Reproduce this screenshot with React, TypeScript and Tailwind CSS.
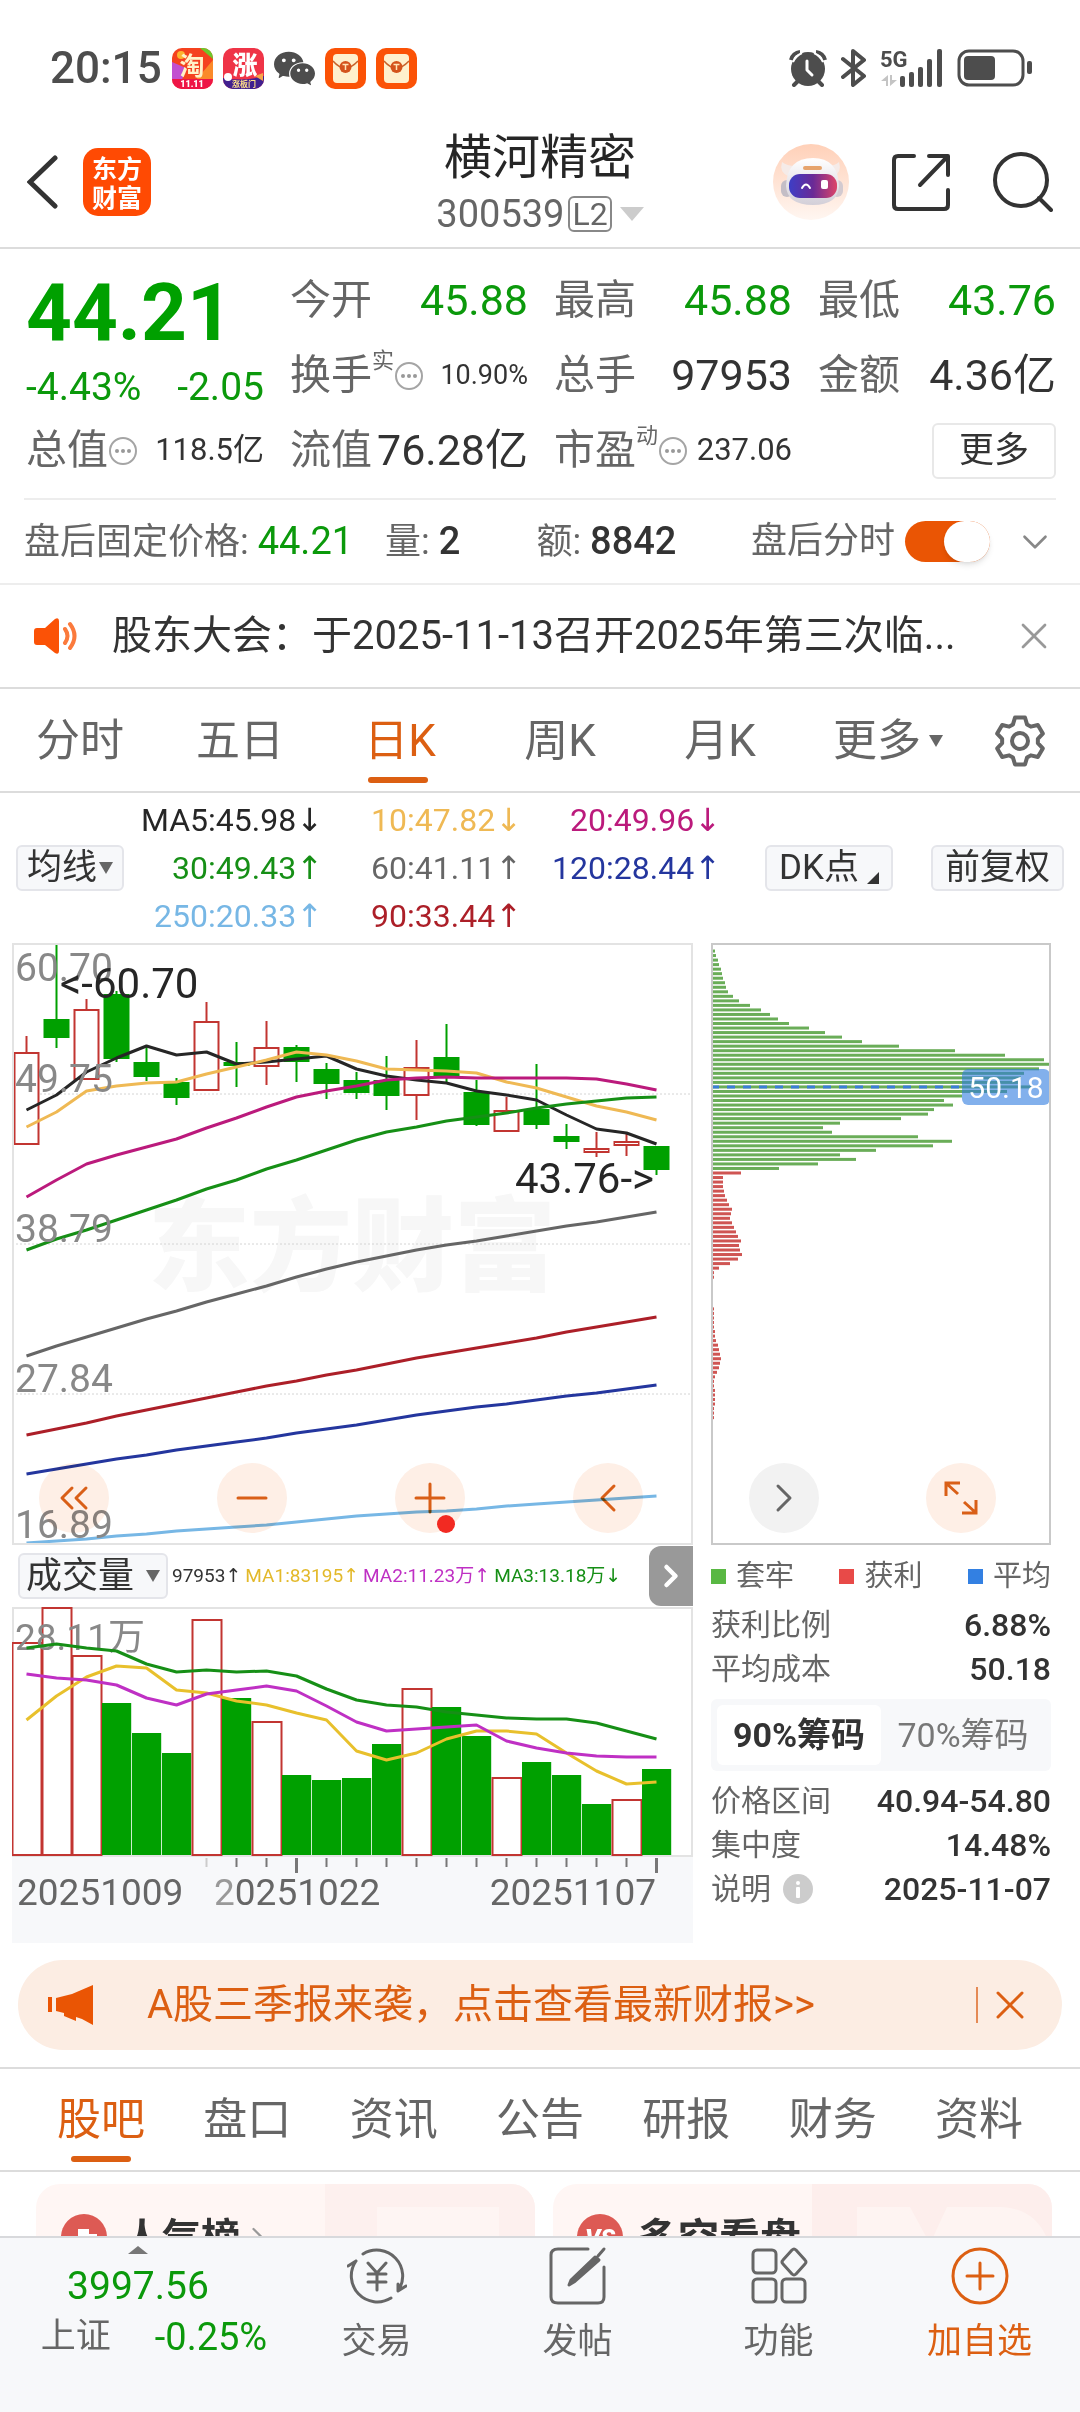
import type { ReactNode } from "react";
import { IoLogoWechat } from "react-icons/io5";
import { ChevronDown, ChevronLeft, ChevronRight, ChevronsLeft, Minus, Plus, X } from "lucide-react";

const GREEN = "#00a000";
const RED = "#c23531";

// x of the i-th trading day inside the 681 wide charts
const dayX = (i: number) => 14.5 + i * 30;
const toPoints = (ys: number[]) => ys.map((y, i) => `${dayX(i)},${y}`).join(" ");

// high, body top, body bottom, low, rising
const candles: [number, number, number, number, boolean][] = [
  [93, 109, 201, 201, true],
  [0, 76, 94, 105, false],
  [56, 66, 136, 136, true],
  [48, 51, 115, 119, false],
  [104, 119, 133, 138, false],
  [135, 139, 154, 162, false],
  [59, 78, 147, 147, true],
  [99, 119, 122, 144, false],
  [78, 104, 123, 142, true],
  [102, 104, 118, 139, false],
  [120, 126, 140, 156, false],
  [129, 137, 149, 156, false],
  [113, 137, 152, 167, false],
  [97, 124, 152, 177, true],
  [81, 114, 133, 139, false],
  [137, 149, 181, 183, false],
  [154, 167, 188, 188, true],
  [121, 166, 181, 186, false],
  [181, 193, 198, 206, false],
  [189, 205, 209, 214, true],
  [190, 198, 202, 213, true],
  [203, 203, 226, 232, false],
];

const averages = [
  { color: "#262626", ys: [167, 152, 129, 115, 103, 112, 109, 121, 119, 116, 113, 126, 133, 137, 140, 148, 152, 157, 172, 186, 190, 201] },
  { color: "#efb954", ys: [184, 169, 148, 143, 140, 139, 131, 124, 117, 109, 112, 118, 126, 127, 128, 130, 139, 145, 154, 163, 169, 177] },
  { color: "#bb1a7c", ys: [254, 237, 221, 212, 204, 196, 185, 175, 164, 154, 148, 143, 137, 135, 134, 135, 135, 135, 135, 136, 141, 147] },
  { color: "#168f16", ys: [307, 296, 287, 277, 267, 257, 246, 237, 226, 217, 207, 197, 189, 184, 178, 174, 170, 165, 161, 158, 155, 154] },
  { color: "#666666", ys: [413, 403, 394, 385, 376, 368, 359, 351, 343, 334, 326, 319, 313, 307, 302, 298, 293, 288, 283, 279, 274, 269] },
  { color: "#ac1f28", ys: [492, 486, 480, 473, 467, 461, 455, 449, 443, 438, 432, 427, 421, 415, 410, 405, 400, 395, 389, 384, 379, 374] },
  { color: "#24369e", ys: [531, 526, 521, 516, 512, 507, 503, 499, 495, 490, 486, 482, 477, 472, 468, 464, 461, 457, 453, 450, 446, 442] },
  { color: "#77b7e5", ys: [600, 598, 596, 593, 591, 588, 586, 584, 582, 579, 576, 573, 571, 569, 568, 566, 563, 561, 559, 557, 555, 553] },
];

const priceLabels = [
  { text: "60.70", y: 38 },
  { text: "49.75", y: 149 },
  { text: "38.79", y: 299 },
  { text: "27.84", y: 449 },
  { text: "16.89", y: 595 },
];

const volumes: [number, boolean][] = [
  [36, true], [1, true], [49, true], [96, false], [126, false], [146, false], [13, true], [91, false],
  [115, true], [168, false], [173, false], [171, false], [137, false], [82, true], [100, false], [129, false],
  [171, true], [155, false], [168, false], [197, false], [193, true], [162, false],
];

const volumeAverages = [
  { color: "#168f16", ys: [41, 37, 41, 44, 57, 65, 63, 65, 64, 69, 82, 93, 98, 100, 105, 108, 111, 112, 112, 116, 124, 132] },
  { color: "#e8c02c", ys: [113, 89, 70, 59, 61, 83, 86, 94, 98, 106, 113, 144, 153, 146, 132, 124, 124, 127, 146, 164, 177, 175] },
  { color: "#bf30c4", ys: [67, 71, 73, 78, 91, 98, 87, 83, 79, 84, 99, 115, 124, 122, 120, 118, 134, 141, 146, 149, 150, 150] },
];

const trapped = [
  1, 3, 4, 6, 7, 9, 10, 11, 13, 14, 16, 21, 27, 38, 49, 58, 66, 77, 97, 113, 130, 150, 187, 243, 293, 332, 339,
  327, 312, 309, 308, 319, 295, 250, 232, 241, 222, 216, 189, 128, 111, 120, 206, 240, 221, 164, 128, 144, 106, 67,
];
const profit = [
  29, 11, 11, 11, 12, 13, 15, 17, 20, 19, 18, 20, 22, 24, 26, 29, 27, 28, 30, 26, 18, 7, 2, 2, 1, 1, 1, 1, 1, 1, 2,
  2, 2, 2, 2, 3, 3, 4, 6, 7, 8, 9, 8, 7, 5, 3, 2, 2, 3, 3, 3, 3, 2, 2, 2, 1, 1, 1, 1, 1, 1,
];

const maLegend = [
  { text: "MA5:45.98", up: false, color: "text-[#262626]" },
  { text: "10:47.82", up: false, color: "text-[#efb954]" },
  { text: "20:49.96", up: false, color: "text-[#bb1a7c]" },
  { text: "30:49.43", up: true, color: "text-[#168f16]" },
  { text: "60:41.11", up: true, color: "text-[#666666]" },
  { text: "120:28.44", up: true, color: "text-[#24369e]" },
  { text: "250:20.33", up: true, color: "text-[#77b7e5]" },
  { text: "90:33.44", up: true, color: "text-[#ac1f28]" },
];

const volumeLegend = [
  { text: "97953", up: true, color: "text-[#333333]" },
  { text: "MA1:83195", up: true, color: "text-[#e3b92a]" },
  { text: "MA2:11.23万", up: true, color: "text-[#bf30c4]" },
  { text: "MA3:13.18万", up: false, color: "text-[#168f16]" },
];

const sections = ["股吧", "盘口", "资讯", "公告", "研报", "财务", "资料"];

function Arrow({ up }: { up: boolean }) {
  return <span className="font-['DejaVu_Sans'] leading-none">{up ? "↑" : "↓"}</span>;
}

function AlarmIcon() {
  return (
    <svg viewBox="0 0 38 38" className="size-[38px]" fill="#4d4d4d">
      <circle cx="19" cy="20" r="17" />
      <path d="M2 11 A10 10 0 0 1 11 3 M27 3 A10 10 0 0 1 36 11" fill="none" stroke="#4d4d4d" strokeWidth="4" />
      <path d="M4 13 A18 18 0 0 1 13 4 M25 4 A18 18 0 0 1 34 13" fill="none" stroke="#fff" strokeWidth="2" />
      <path d="M9 32 L5 36 M29 32 L33 36" stroke="#4d4d4d" strokeWidth="4" strokeLinecap="round" />
      <path d="M18 12 V21 L23 26" fill="none" stroke="#fff" strokeWidth="3" strokeLinecap="round" strokeLinejoin="round" />
    </svg>
  );
}

function BluetoothIcon() {
  return (
    <svg viewBox="0 0 26 38" className="h-[38px] w-[26px]" fill="none" stroke="#4d4d4d" strokeWidth="4" strokeLinecap="round" strokeLinejoin="round">
      <path d="M2 10 L23 27 L12 36 V2 L23 11 L2 28" />
    </svg>
  );
}

function SignalIcon() {
  return (
    <svg viewBox="0 0 62 38" className="h-[38px] w-[62px] overflow-visible" fill="#4d4d4d">
      <text x="-1" y="18" fontSize="22" fontWeight="700">5G</text>
      <path d="M0 32 L7 26 V37 H5 V32 Z M9 26 H11 V31 H16 L9 37 Z" fill="#c4c4c4" />
      <rect x="19" y="27" width="5" height="11" rx="2" />
      <rect x="28" y="23" width="5" height="15" rx="2" />
      <rect x="37" y="18" width="5" height="20" rx="2" />
      <rect x="46" y="10" width="5" height="28" rx="2" />
      <rect x="56" y="0" width="5" height="38" rx="2" />
    </svg>
  );
}

function BatteryIcon() {
  return (
    <svg viewBox="0 0 76 38" className="h-[38px] w-[76px]" fill="#4d4d4d">
      <rect x="2" y="2" width="64" height="34" rx="10" fill="none" stroke="#4d4d4d" strokeWidth="3" />
      <rect x="7" y="7" width="31" height="24" rx="4" />
      <rect x="70" y="12" width="5" height="13" rx="2" />
    </svg>
  );
}

function EnvelopeIcon() {
  return (
    <svg viewBox="0 0 41 41" className="size-[41px]">
      <rect width="41" height="41" rx="10" fill="#fb5206" />
      <rect x="8" y="6" width="25" height="29" rx="4" fill="#fff0cd" />
      <path d="M8 13 Q20 27 33 13" fill="none" stroke="#c8622a" strokeWidth="1.5" />
      <circle cx="20.5" cy="19" r="6" fill="#d4531c" />
      <path d="M17.5 16.5 H23.5 M20.5 16.5 V22" stroke="#ffe3b5" strokeWidth="1.5" />
    </svg>
  );
}

function TaobaoIcon() {
  return (
    <svg viewBox="0 0 41 41" className="size-[41px]">
      <clipPath id="tb"><rect width="41" height="41" rx="10" /></clipPath>
      <g clipPath="url(#tb)">
        <rect width="41" height="41" fill="#f5421f" />
        <path d="M0 14 L14 20 L10 32 H0 Z" fill="#c24fd0" />
        <path d="M41 12 V32 H24 Z" fill="#fb8a2a" />
        <circle cx="9" cy="7" r="4" fill="#fcb42f" />
        <path d="M28 0 H41 V11 Z" fill="#6cc92c" />
        <rect y="31" width="41" height="10" fill="#ee1546" />
        <text x="20" y="27" fontSize="25" fontWeight="700" fill="#fff3c8" textAnchor="middle">淘</text>
        <text x="20" y="39" fontSize="9" fontWeight="900" fill="#fff" textAnchor="middle">11.11</text>
      </g>
    </svg>
  );
}

function ZhangIcon() {
  return (
    <svg viewBox="0 0 41 41" className="size-[41px]">
      <clipPath id="zh"><rect width="41" height="41" rx="10" /></clipPath>
      <g clipPath="url(#zh)">
        <rect width="41" height="41" fill="#ef3447" />
        <path d="M0 30 Q20 34 41 28 V41 H0 Z" fill="#41208f" />
        <path d="M32 28 L40 25 V33 Z" fill="#f7a54a" />
        <circle cx="5" cy="29" r="4" fill="#fff" />
        <text x="22" y="26" fontSize="25" fontWeight="900" fill="#fff" textAnchor="middle">涨</text>
        <text x="21" y="39" fontSize="8" fontWeight="700" fill="#ffe08a" textAnchor="middle">涨板门</text>
      </g>
    </svg>
  );
}

function LogoIcon() {
  return (
    <svg viewBox="0 0 68 68" className="size-[68px]">
      <rect width="68" height="68" rx="15" fill="#ff4a03" />
      <text x="34" y="30" fontSize="25" fontWeight="700" fill="#fff" textAnchor="middle">东方</text>
      <text x="34" y="59" fontSize="25" fontWeight="700" fill="#fff" textAnchor="middle">财富</text>
    </svg>
  );
}

function RobotIcon() {
  return (
    <svg viewBox="0 0 76 76" className="size-[76px]">
      <defs>
        <linearGradient id="halo" x1="0" y1="0" x2="0" y2="1">
          <stop offset="0" stopColor="#ffd0b8" />
          <stop offset="1" stopColor="#fff6f1" />
        </linearGradient>
        <linearGradient id="visor" x1="0" y1="0" x2="1" y2="0">
          <stop offset="0" stopColor="#3d3ec6" />
          <stop offset="0.5" stopColor="#6a2a96" />
          <stop offset="1" stopColor="#dd4468" />
        </linearGradient>
        <linearGradient id="shell" x1="0" y1="0" x2="0" y2="1">
          <stop offset="0" stopColor="#ffffff" />
          <stop offset="1" stopColor="#d3cfd8" />
        </linearGradient>
      </defs>
      <circle cx="38" cy="38" r="38" fill="url(#halo)" />
      <path d="M15 32 Q6 28 9 18 Q14 22 22 22 Z M61 32 Q69 28 66 18 Q62 22 54 22 Z" fill="#f5ebe8" />
      <rect x="8" y="36" width="12" height="17" rx="6" fill="#c4bec6" />
      <rect x="58" y="36" width="12" height="17" rx="6" fill="#d3cad0" />
      <path d="M13 42 Q14 14 40 14 Q65 14 66 42 Q65 61 40 61 Q14 61 13 42 Z" fill="url(#shell)" />
      <rect x="30" y="22" width="19" height="4" rx="2" fill="#e6a36c" />
      <rect x="16" y="30" width="48" height="24" rx="11" fill="url(#visor)" />
      <path d="M29 44 Q33 37 37 44" fill="none" stroke="#fff" strokeWidth="2" strokeLinecap="round" />
      <rect x="48" y="36" width="7" height="9" rx="2" fill="#fff" />
    </svg>
  );
}

function ShareIcon() {
  return (
    <svg viewBox="0 0 58 58" className="size-[58px]" fill="none" stroke="#333" strokeWidth="4" strokeLinecap="round" strokeLinejoin="round">
      <path d="M22 3 H6 Q2 3 2 7 V52 Q2 56 6 56 H52 Q56 56 56 52 V37" />
      <path d="M37 3 H56 V22 M55 4 L28 32" />
    </svg>
  );
}

function SearchIcon() {
  return (
    <svg viewBox="0 0 60 60" className="size-[60px]" fill="none" stroke="#333" strokeWidth="4" strokeLinecap="round">
      <circle cx="28" cy="28" r="26" />
      <path d="M46 46 L58 58" />
    </svg>
  );
}

function GearIcon() {
  const points: string[] = [];
  for (let tooth = 0; tooth < 6; tooth++) {
    const steps: [number, number][] = [[-23, 18], [-12, 24], [12, 24], [23, 18]];
    for (const [offset, radius] of steps) {
      const angle = ((tooth * 60 + offset - 90) * Math.PI) / 180;
      points.push(`${27 + radius * Math.cos(angle)},${27 + radius * Math.sin(angle)}`);
    }
  }
  return (
    <svg viewBox="0 0 54 54" className="size-[54px]" fill="none" stroke="#666" strokeWidth="4" strokeLinejoin="round">
      <polygon points={points.join(" ")} />
      <circle cx="27" cy="27" r="8" />
    </svg>
  );
}

function SpeakerIcon() {
  return (
    <svg viewBox="0 0 46 38" className="h-[38px] w-[46px]" fill="#fb5206">
      <path d="M3 11 H11 L21 2 Q25 0 25 4 V34 Q25 38 21 36 L11 28 H3 Q0 28 0 25 V14 Q0 11 3 11 Z" />
      <path d="M31 12 Q36 19 31 26 M36 7 Q45 19 36 31" fill="none" stroke="#fb7a3c" strokeWidth="4" strokeLinecap="round" />
    </svg>
  );
}

function MegaphoneIcon() {
  return (
    <svg viewBox="0 0 46 40" className="h-10 w-[46px]" fill="#ea5504">
      <rect x="0" y="12" width="4" height="15" />
      <path d="M8 13 L24 9 L45 0 V40 L34 34 L28 32 V36 L16 31 V28 L8 26 Z" />
    </svg>
  );
}

function Dots() {
  return (
    <svg viewBox="0 0 30 30" className="size-[30px] shrink-0" fill="#999">
      <circle cx="15" cy="15" r="13" fill="none" stroke="#a5a5a5" strokeWidth="2" />
      <circle cx="9" cy="15" r="2" />
      <circle cx="15" cy="15" r="2" />
      <circle cx="21" cy="15" r="2" />
    </svg>
  );
}

function Triangle({ className }: { className: string }) {
  return (
    <svg viewBox="0 0 14 12" preserveAspectRatio="none" className={className} fill="currentColor">
      <path d="M0 0 H14 L7 12 Z" />
    </svg>
  );
}

const tones = {
  green: "text-[43px] text-[#0b990b]",
  dark: "text-[43px] text-[#333]",
  small: "text-[31px] text-[#333]",
  tiny: "text-[27px] text-[#333]",
};

type QuoteProps = { label: string; value: string; mark?: string; dots?: boolean; tone?: keyof typeof tones };

function Quote({ label, value, mark, dots, tone = "dark" }: QuoteProps) {
  return (
    <div className="flex items-center justify-between whitespace-nowrap">
      <div className="flex items-center text-[41px] text-[#666]">
        {label}
        {mark && <span className="self-start text-[22px] leading-none">{mark}</span>}
        {dots && <Dots />}
      </div>
      <span className={tones[tone]}>{value}</span>
    </div>
  );
}

function RoundButton({ label, gray, children }: { label: string; gray?: boolean; children: ReactNode }) {
  return (
    <button
      aria-label={label}
      className={`relative flex size-[70px] items-center justify-center rounded-full mix-blend-multiply ${
        gray ? "bg-[#f2f2f2] text-[#666]" : "bg-[#feefe6] text-[#d95f17]"
      }`}
    >
      {children}
    </button>
  );
}

function KLineChart() {
  return (
    <div className="relative">
      <svg viewBox="0 0 681 602" className="block w-full">
        <text x="340" y="340" fontSize="102" fontWeight="900" fill="#f7f7f7" textAnchor="middle">东方财富</text>
        <path d="M0 151 H681 M0 301 H681 M0 451 H681" stroke="#d4d4d4" strokeDasharray="2 2" />
        {candles.map(([high, top, bottom, low, rising], i) => (
          <g key={i} stroke={rising ? RED : GREEN} strokeWidth="2" fill={rising ? "#fff" : GREEN}>
            <path d={`M${dayX(i)} ${high} V${top} M${dayX(i)} ${bottom} V${low}`} />
            <rect x={dayX(i) - 12} y={top + 1} width="24" height={bottom - top - 1} />
          </g>
        ))}
        {averages.map(({ color, ys }) => (
          <polyline key={color} points={toPoints(ys)} fill="none" stroke={color} strokeWidth="3" strokeLinejoin="round" />
        ))}
        {priceLabels.map(({ text, y }) => (
          <text key={text} x="3" y={y} fontSize="39" fill="#888">{text}</text>
        ))}
        <text x="48" y="55" fontSize="42" fill="#262626">&lt;-60.70</text>
        <text x="642" y="250" fontSize="42" fill="#262626" textAnchor="end">43.76-&gt;</text>
        <rect x="1" y="1" width="679" height="600" fill="none" stroke="#e3e3e3" strokeWidth="2" />
      </svg>
      <div className="absolute inset-x-0 bottom-3 flex justify-between pr-[50px] pl-[27px]">
        <RoundButton label="最左"><ChevronsLeft className="size-12" strokeWidth={1.5} /></RoundButton>
        <RoundButton label="缩小"><Minus className="size-12" strokeWidth={1.5} /></RoundButton>
        <RoundButton label="放大">
          <Plus className="size-12" strokeWidth={1.5} />
          <i className="absolute right-2.5 bottom-0 size-[18px] rounded-full bg-[#f22a22]" />
        </RoundButton>
        <RoundButton label="左移"><ChevronLeft className="size-12" strokeWidth={1.5} /></RoundButton>
      </div>
    </div>
  );
}

function VolumeChart() {
  return (
    <svg viewBox="0 0 681 336" className="block w-full">
      <rect y="250" width="681" height="86" fill="#f7f8fa" />
      <rect x="1" y="1" width="679" height="248" fill="none" stroke="#e3e3e3" strokeWidth="2" />
      {volumes.map(([top, rising], i) =>
        rising ? (
          <rect key={i} x={dayX(i) - 14} y={top} width="29" height={248 - top} fill="#fff" stroke={RED} strokeWidth="2" />
        ) : (
          <rect key={i} x={dayX(i) - 14.5} y={top} width="29.2" height={248 - top} fill={GREEN} />
        )
      )}
      <text x="3" y="43" fontSize="37" fill="#888">28.11万</text>
      {volumeAverages.map(({ color, ys }) => (
        <polyline key={color} points={toPoints(ys)} fill="none" stroke={color} strokeWidth="3" strokeLinejoin="round" />
      ))}
      {volumes.map((_, i) =>
        i > 5 ? (
          <path
            key={i}
            d={`M${dayX(i)} 251 V${i === 9 || i === 21 ? 266 : 260}`}
            stroke={i === 6 ? "#ccc" : "#777"}
            strokeWidth={i === 9 || i === 21 ? 3 : 2}
          />
        ) : null
      )}
      <g fontSize="37" fill="#666">
        <text x="5" y="298">20251009</text>
        <text x="202" y="298"><tspan fill="#999">2</tspan>0251022</text>
        <text x="644" y="298" textAnchor="end">20251107</text>
      </g>
    </svg>
  );
}

function ChipChart() {
  return (
    <div className="relative">
      <svg viewBox="0 0 340 602" className="block w-full">
        {trapped.map((width, i) => (
          <rect key={i} x="1" y={2 + i * 4.53} width={width} height="3" fill="#6aad58" />
        ))}
        {profit.map((width, i) => (
          <rect key={i} x="1" y={2 + (i + 50) * 4.53} width={width} height="3" fill="#cf5553" />
        ))}
        <path d="M0 144 H252" stroke="#3b7dd8" strokeWidth="3" strokeDasharray="8 8" />
        <rect x="251" y="126" width="88" height="36" rx="6" fill="#2f7be0" fillOpacity="0.6" />
        <text x="295" y="155" fontSize="30" fill="#fff" textAnchor="middle">50.18</text>
        <rect x="1" y="1" width="338" height="600" fill="none" stroke="#c9c9c9" strokeWidth="2" />
      </svg>
      <div className="absolute inset-x-0 bottom-3 flex justify-between pr-[55px] pl-[38px]">
        <RoundButton label="收起" gray><ChevronRight className="size-12" strokeWidth={1.5} /></RoundButton>
        <RoundButton label="全屏">
          <svg viewBox="0 0 34 34" className="size-[34px]" fill="none" stroke="currentColor" strokeWidth="3">
            <path d="M2 15 V2 H16 M3 3 L14 13 M32 19 V32 H18 M31 31 L20 21" />
          </svg>
        </RoundButton>
      </div>
    </div>
  );
}

function ChipRow({ label, value }: { label: ReactNode; value: string }) {
  return (
    <div className="flex h-11 items-center justify-between">
      <span className="flex items-center gap-3 text-[30px] text-[#666]">{label}</span>
      <span className="text-[32px] font-medium text-[#333]">{value}</span>
    </div>
  );
}

function ChipPanel() {
  return (
    <div>
      <ChipChart />
      <div className="flex h-[58px] items-center justify-between pt-1 text-[29px] text-[#666]">
        <span className="flex items-center gap-2.5"><i className="size-[15px] bg-[#59b843]" />套牢</span>
        <span className="flex items-center gap-2.5"><i className="size-[15px] bg-[#e84a48]" />获利</span>
        <span className="flex items-center gap-2.5"><i className="size-[15px] bg-[#3380e2]" />平均</span>
      </div>
      <ChipRow label="获利比例" value="6.88%" />
      <ChipRow label="平均成本" value="50.18" />
      <div className="my-2 flex h-[72px] rounded-md bg-[#f7f8fa] p-1.5 text-[34px]">
        <button className="flex-1 rounded-md bg-white font-bold text-[#333]">90%筹码</button>
        <button className="flex-1 text-[#777]">70%筹码</button>
      </div>
      <ChipRow label="价格区间" value="40.94-54.80" />
      <ChipRow label="集中度" value="14.48%" />
      <ChipRow
        label={
          <>
            说明
            <svg viewBox="0 0 30 30" className="size-[30px]" fill="#fff">
              <circle cx="15" cy="15" r="15" fill="#ccc" />
              <circle cx="15" cy="9" r="2" />
              <rect x="13" y="13" width="4" height="11" rx="1" />
            </svg>
          </>
        }
        value="2025-11-07"
      />
    </div>
  );
}

function NavItem({ label, active, children }: { label: string; active?: boolean; children: ReactNode }) {
  return (
    <button className={`flex flex-1 flex-col items-center gap-3.5 pt-2 text-[35px] ${active ? "text-[#dc5f12]" : "text-[#666]"}`}>
      <svg viewBox="0 0 60 60" className="size-[60px]" fill="none" stroke="currentColor" strokeWidth="3" strokeLinecap="round" strokeLinejoin="round">
        {children}
      </svg>
      {label}
    </button>
  );
}

export default function App() {
  return (
    <div className="flex h-screen flex-col bg-white font-[Roboto,'Noto_Sans_CJK_SC',sans-serif] leading-tight text-[#333]">
      <main className="min-h-0 flex-1 overflow-hidden">
        {/* Status bar */}
        <div className="flex h-[100px] items-center justify-between pt-9 pr-[47px] pl-[50px]">
          <div className="flex items-center gap-2.5 text-[#4d4d4d]">
            <span className="text-[44px] font-medium">20:15</span>
            <TaobaoIcon />
            <ZhangIcon />
            <IoLogoWechat className="size-[41px]" />
            <EnvelopeIcon />
            <EnvelopeIcon />
          </div>
          <div className="flex items-center gap-3.5">
            <AlarmIcon />
            <BluetoothIcon />
            <SignalIcon />
            <BatteryIcon />
          </div>
        </div>

        {/* Header */}
        <header className="grid h-[149px] grid-cols-[1fr_auto_1fr] items-center border-b-2 border-[#dcdcdc] px-[27px] pt-4">
          <div className="flex items-center gap-6">
            <button aria-label="返回">
              <svg viewBox="0 0 32 56" className="h-14 w-8" fill="none" stroke="#333" strokeWidth="5" strokeLinecap="round">
                <path d="M28 4 L3 28 L28 52" />
              </svg>
            </button>
            <LogoIcon />
          </div>
          <div className="flex flex-col items-center">
            <h1 className="text-[48px] leading-[64px] text-[#262626]">横河精密</h1>
            <div className="flex items-center gap-1 text-[38px] leading-[48px] text-[#666]">
              300539
              <span className="rounded-md border-2 border-[#888] px-0.5 text-[32px] leading-8">L2</span>
              <Triangle className="ml-1 h-3.5 w-6 text-[#ccc]" />
            </div>
          </div>
          <div className="flex items-center justify-end gap-[43px]">
            <RobotIcon />
            <button aria-label="分享"><ShareIcon /></button>
            <button aria-label="搜索"><SearchIcon /></button>
          </div>
        </header>

        {/* Quotes */}
        <section className="grid auto-rows-[75px] grid-cols-4 gap-x-[26px] pt-3.5 pr-6 pb-2.5 pl-[26px]">
          <div className="row-span-2 flex flex-col justify-between pb-1.5">
            <div className="text-[80px] leading-[100px] font-bold text-[#00a000]">44.21</div>
            <div className="flex justify-between text-[39px] leading-10 text-[#0b990b]">
              <span>-4.43%</span>
              <span>-2.05</span>
            </div>
          </div>
          <Quote label="今开" value="45.88" tone="green" />
          <Quote label="最高" value="45.88" tone="green" />
          <Quote label="最低" value="43.76" tone="green" />
          <Quote label="换手" mark="实" dots value="10.90%" tone="tiny" />
          <Quote label="总手" value="97953" />
          <Quote label="金额" value="4.36亿" />
          <Quote label="总值" dots value="118.5亿" tone="small" />
          <Quote label="流值" value="76.28亿" />
          <Quote label="市盈" mark="动" dots value="237.06" tone="small" />
          <button className="h-14 w-[124px] self-center justify-self-end rounded-md border-2 border-[#e8e8e8] text-[35px] leading-10">更多</button>
        </section>

        {/* After-hours fixed price */}
        <div className="mx-6 flex h-[85px] items-center border-t-2 border-[#ededed] text-[36px] text-[#666]">
          <span>盘后固定价格: <b className="text-[38px] font-normal text-[#0b990b]">44.21</b></span>
          <span className="ml-8">量: <b className="text-[38px] font-medium text-[#333]">2</b></span>
          <span className="ml-[76px]">额: <b className="text-[38px] font-medium text-[#333]">8842</b></span>
          <label className="ml-auto flex items-center gap-2.5">
            盘后分时
            <input type="checkbox" defaultChecked className="peer sr-only" />
            <span className="flex h-[41px] w-[85px] justify-end rounded-full bg-[#ea5504]">
              <i className="h-[41px] w-[46px] rounded-full bg-white shadow-md" />
            </span>
          </label>
          <button aria-label="展开" className="ml-6"><ChevronDown className="size-[42px] text-[#888]" strokeWidth={1.5} /></button>
        </div>

        {/* Notice */}
        <div className="flex h-[106px] items-center border-y-2 border-t-[#ededed] border-b-[#dcdcdc] pr-6 pl-[34px]">
          <SpeakerIcon />
          <p className="ml-8 flex-1 text-[40px] whitespace-nowrap">股东大会：于2025-11-13召开2025年第三次临...</p>
          <button aria-label="关闭"><X className="size-11 text-[#999]" strokeWidth={1.5} /></button>
        </div>

        {/* Period tabs */}
        <nav className="grid h-[104px] grid-cols-[repeat(6,160fr)_120fr] items-center justify-items-center border-b-2 border-[#dcdcdc] pt-0.5 text-[44px] text-[#666]">
          <button>分时</button>
          <button>五日</button>
          <button className="relative text-[#dc5f12]">
            日K
            <i className="absolute -bottom-3.5 left-1 h-1.5 w-[60px] rounded-full bg-[#dc5f12]" />
          </button>
          <button>周K</button>
          <button>月K</button>
          <button className="flex items-center gap-2 pl-4">更多<Triangle className="h-3 w-3.5" /></button>
          <button aria-label="设置"><GearIcon /></button>
        </nav>

        {/* Moving averages */}
        <div className="flex h-[150px] items-center px-4">
          <button className="flex h-[46px] w-[108px] items-center justify-center gap-0.5 rounded-md border-2 border-[#e4e5ea] bg-[#f7f8fa] text-[35px] leading-9">
            均线<Triangle className="h-3 w-3.5 text-[#666]" />
          </button>
          <ul className="grid w-[597px] auto-rows-[48px] grid-cols-3 items-center text-right text-[32px] whitespace-nowrap">
            {maLegend.map(({ text, up, color }) => (
              <li key={text} className={color}>{text}<Arrow up={up} /></li>
            ))}
          </ul>
          <div className="flex flex-1 justify-end gap-[38px] text-[35px] leading-9">
            <button className="flex h-[46px] w-[128px] items-center justify-center gap-2 rounded-md border-2 border-[#e4e5ea] bg-[#f7f8fa]">
              DK点
              <svg viewBox="0 0 12 12" className="mt-5 size-3"><path d="M12 0 V12 H0 Z" fill="#333" /></svg>
            </button>
            <button className="h-[46px] w-[133px] rounded-md border-2 border-[#e4e5ea] bg-[#f7f8fa]">前复权</button>
          </div>
        </div>

        {/* Charts */}
        <div className="grid grid-cols-[681fr_340fr] gap-[18px] pr-[29px] pl-3">
          <div>
            <KLineChart />
            <div className="flex h-[62px] items-center pl-1.5">
              <button className="flex h-[46px] w-[150px] shrink-0 items-center justify-center gap-3 rounded-md border-2 border-[#e4e5ea] bg-[#f7f8fa] text-[36px] leading-9">
                成交量<Triangle className="h-3 w-3.5 text-[#666]" />
              </button>
              <ul className="ml-1 flex min-w-0 flex-1 gap-1 text-[19px] whitespace-nowrap">
                {volumeLegend.map(({ text, up, color }) => (
                  <li key={text} className={color}>{text}<Arrow up={up} /></li>
                ))}
              </ul>
              <button aria-label="下一个指标" className="flex h-[60px] w-[44px] shrink-0 items-center justify-center rounded-l-xl bg-[#999] text-white">
                <ChevronRight className="size-9" strokeWidth={3} />
              </button>
            </div>
            <VolumeChart />
          </div>
          <ChipPanel />
        </div>

        {/* Report banner */}
        <div className="mx-[18px] mt-[17px] mb-[17px] flex h-[90px] items-center rounded-full bg-[#fcede3] pr-7 pl-[30px] text-[#dc5f12]">
          <MegaphoneIcon />
          <a href="#report" className="ml-[53px] flex-1 text-[40px]">A股三季报来袭，点击查看最新财报&gt;&gt;</a>
          <i className="h-9 w-0.5 bg-[#e58a55]" />
          <button aria-label="关闭" className="ml-2"><X className="size-12" strokeWidth={1.5} /></button>
        </div>

        {/* Section tabs */}
        <nav className="flex h-[105px] items-center justify-between border-y-2 border-[#dcdcdc] px-[57px] pt-0.5 text-[44px] text-[#666]">
          {sections.map((name, i) => (
            <button key={name} className={i === 0 ? "relative text-[#dc5f12]" : ""}>
              {name}
              {i === 0 && <i className="absolute -bottom-3.5 left-3.5 h-1.5 w-[60px] rounded-full bg-[#dc5f12]" />}
            </button>
          ))}
        </nav>

        <div className="grid grid-cols-2 gap-[18px] pt-3 pr-7 pl-9 text-[39px] font-bold">
          <a href="#rank" className="relative flex h-[140px] items-start gap-4 overflow-hidden rounded-3xl bg-[#fff6f4] pt-[30px] pl-[25px]">
            <svg viewBox="0 0 255 140" className="absolute top-0 right-0 h-full">
              <path d="M0 140 V65 H45 V0 H255 V140 Z" fill="#fdf0ee" />
              <rect x="97" y="23" width="122" height="120" fill="#fef5f3" />
            </svg>
            <svg viewBox="0 0 46 46" className="relative size-[46px]">
              <circle cx="23" cy="23" r="23" fill="#dd5a54" />
              <path d="M10 24 H17 V15 H28 V20 H36 V36 H10 Z" fill="#fff" />
            </svg>
            <span className="relative flex items-center">人气榜<ChevronRight className="size-9 text-[#999]" strokeWidth={1.5} /></span>
          </a>
          <a href="#vote" className="relative flex h-[140px] items-start gap-3.5 overflow-hidden rounded-3xl bg-[#fff6f4] pt-[30px] pl-6">
            <svg viewBox="0 0 240 140" className="absolute top-0 right-0 h-full">
              <rect width="240" height="140" fill="#fdeeec" />
              <path d="M45 23 H98 L118 60 L135 23 H190 Q230 25 240 70 V100 Q210 55 180 65 L160 140 H45 Z" fill="#fef4f2" />
            </svg>
            <svg viewBox="0 0 46 46" className="relative size-[46px]">
              <circle cx="23" cy="23" r="23" fill="#dd5a54" />
              <text x="23" y="32" fontSize="24" fontWeight="900" fontStyle="italic" fill="#fff" textAnchor="middle">VS</text>
            </svg>
            <span className="relative text-[41px]">多空看盘</span>
          </a>
        </div>
      </main>

      {/* Bottom bar */}
      <footer className="flex h-[176px] shrink-0 border-t-2 border-[#d8d9dc] bg-[#f7f8fa]">
        <a href="#index" className="flex w-[276px] flex-col items-center pt-2 text-[#0b990b]">
          <Triangle className="h-2 w-5 rotate-180 text-[#777]" />
          <span className="mt-1.5 text-[39px] leading-[52px]">3997.56</span>
          <span className="flex items-center gap-11 pl-8 text-[38px] leading-[50px]">
            <b className="text-[35px] font-normal text-[#666]">上证</b>-0.25%
          </span>
        </a>
        <NavItem label="交易">
          <path d="M16 8 A26 26 0 0 1 51 45 M44 52 A26 26 0 0 1 9 15 M1 20 L9 15 M59 40 L51 45 V38" />
          <path d="M21 17 L30 27 L39 17 M30 27 V44 M21 28 H39 M21 36 H39" />
        </NavItem>
        <NavItem label="发帖">
          <path d="M40 3 H10 Q3 3 3 9 V51 Q3 57 10 57 H50 Q56 57 56 51 V21" />
          <path d="M50 10 L56 3 M47 11 L51 14 L26 36 L21 39 L23 34 Z" fill="currentColor" />
        </NavItem>
        <NavItem label="功能">
          <rect x="4" y="4" width="23" height="23" rx="4" />
          <rect x="4" y="33" width="23" height="23" rx="4" />
          <rect x="33" y="33" width="23" height="23" rx="4" />
          <path d="M43 4 Q45 2 47 4 L56 14 Q58 16 56 18 L47 28 Q45 30 43 28 L34 18 Q32 16 34 14 Z" />
        </NavItem>
        <NavItem label="加自选" active>
          <circle cx="30" cy="30" r="27" />
          <path d="M30 17 V43 M17 30 H43" />
        </NavItem>
      </footer>
    </div>
  );
}
